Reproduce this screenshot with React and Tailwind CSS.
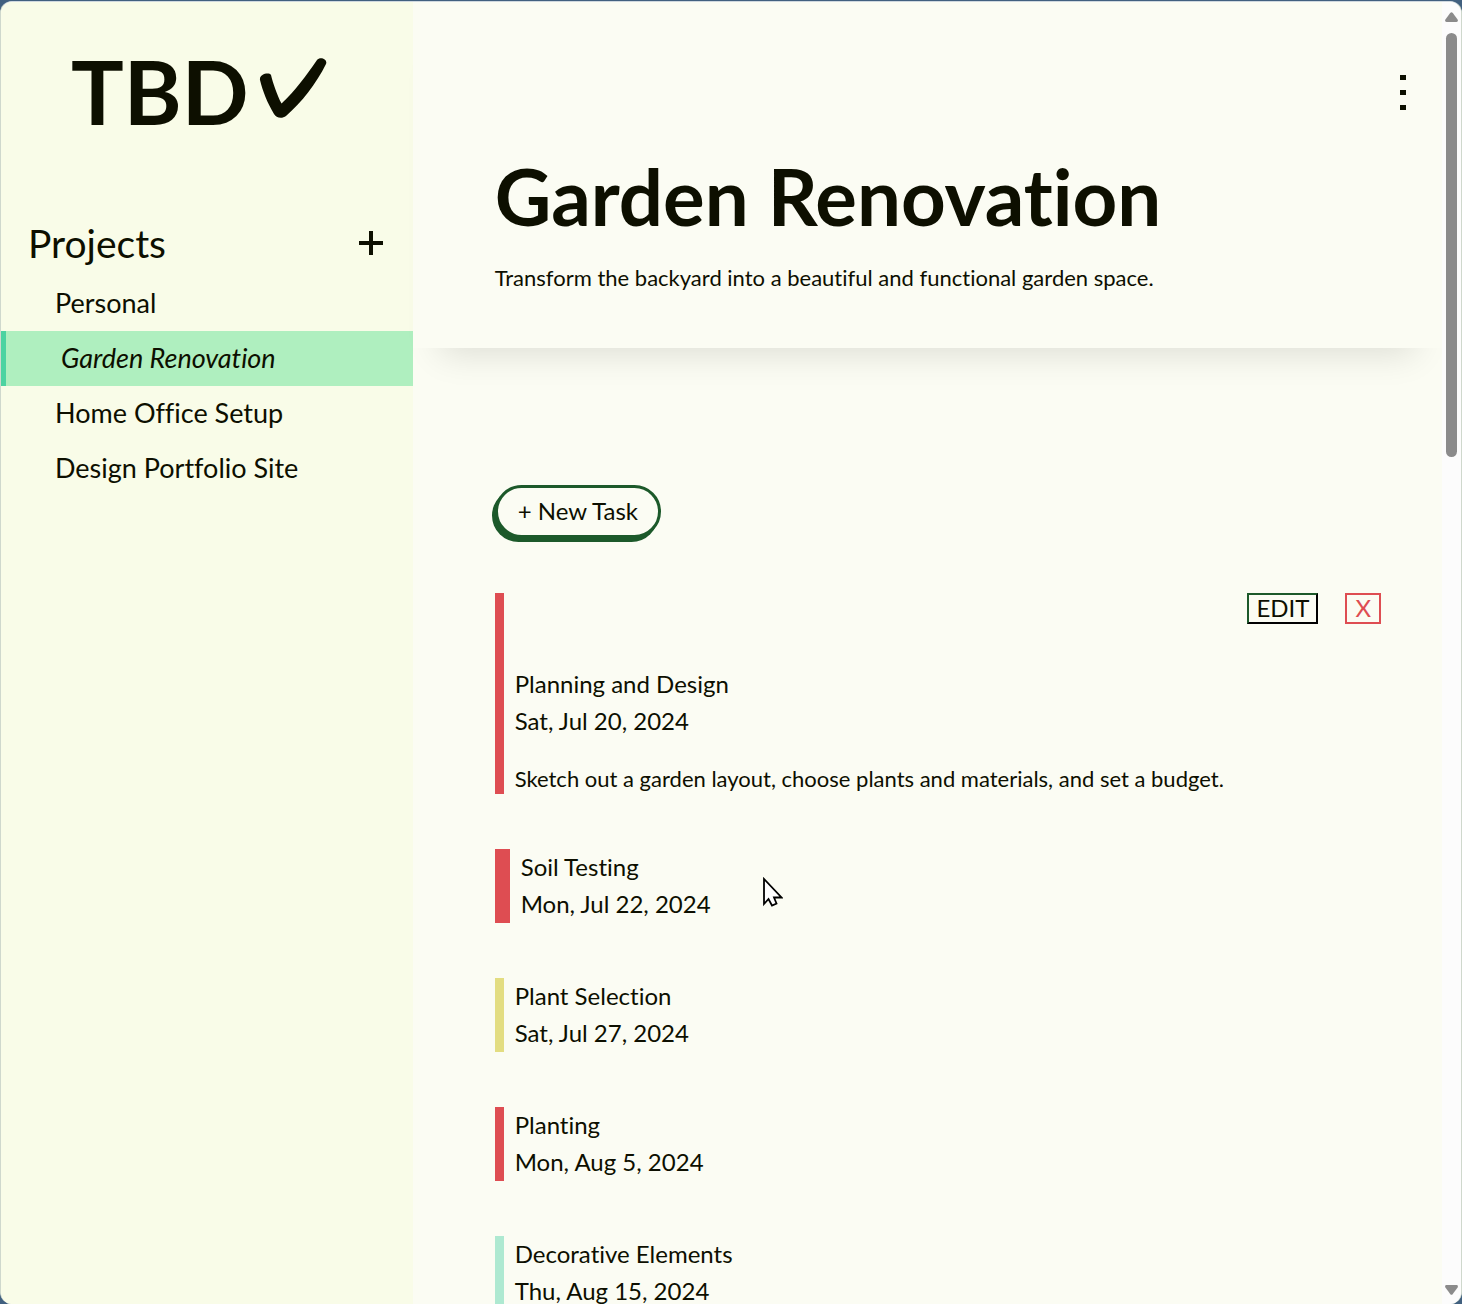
import React from "react";

const projects = ["Personal", "Garden Renovation", "Home Office Setup", "Design Portfolio Site"];

const tasks = [
  {
    title: "Planning and Design",
    date: "Sat, Jul 20, 2024",
    bar: "border-[#de4d52] border-l-9",
    details: "Sketch out a garden layout, choose plants and materials, and set a budget.",
  },
  { title: "Soil Testing", date: "Mon, Jul 22, 2024", bar: "border-[#de4d52] border-l-15" },
  { title: "Plant Selection", date: "Sat, Jul 27, 2024", bar: "border-[#e3dd81] border-l-9" },
  { title: "Planting", date: "Mon, Aug 5, 2024", bar: "border-[#de4d52] border-l-9" },
  { title: "Decorative Elements", date: "Thu, Aug 15, 2024", bar: "border-[#aee9d1] border-l-9" },
];

function Sidebar() {
  return (
    <aside className="bg-[#f9fce8]">
      <h1 className="flex items-start pl-[70px] pt-[31px] text-[88px] font-bold leading-[116px]">
        TBD
        <svg viewBox="0 0 68 62" className="ml-[10px] mt-6 h-[62px] w-[68px]" fill="currentColor" aria-hidden="true">
          <path d="M1 23C0 17 10 15 12 18C14 26 18 38 22.500 46.500C36 34 47 19 58 3C61-1 69 2 67 7C57 27 43 45 27 59C23 62 17 61 15 57C8 45 4 35 1 23Z" />
        </svg>
      </h1>
      <div className="flex items-center justify-between pl-[27px] pr-[29px] pt-[64px]">
        <h2 className="text-[39px] leading-[60px]">Projects</h2>
        <button type="button" aria-label="Add project">
          <svg viewBox="0 0 26 26" className="size-[26px]" stroke="currentColor" strokeWidth="4" aria-hidden="true">
            <path d="M1 13H25M13 1V25" />
          </svg>
        </button>
      </div>
      <nav className="pt-[3px]">
        <ul>
          {projects.map((name) => (
            <li key={name}>
              <a
                href="#"
                aria-current={name === "Garden Renovation" ? "page" : undefined}
                className="block pb-[2px] pl-[54px] text-[27px] leading-[53px] aria-[current=page]:border-l-5 aria-[current=page]:border-[#4cd3a1] aria-[current=page]:bg-[#afefbf] aria-[current=page]:pl-[55px] aria-[current=page]:italic"
              >
                {name}
              </a>
            </li>
          ))}
        </ul>
      </nav>
    </aside>
  );
}

function Task({ task }) {
  return (
    <li className={"pb-[2px] pl-[11px] text-[24px] leading-[36px] " + task.bar}>
      {task.details && (
        <div className="flex h-[73px] items-start justify-end gap-[27px]">
          <button type="button" className="border-2 border-b-black border-l-[#1c592a] border-r-black border-t-[#1c592a] px-[7px] pb-[2px] leading-[25px]">
            EDIT
          </button>
          <button type="button" aria-label="Delete task" className="border-2 border-[#de4d52] px-2 pb-[2px] leading-[25px] text-[#de4d52]">
            X
          </button>
        </div>
      )}
      <h3 className="pb-px">{task.title}</h3>
      <p className="-mb-px">{task.date}</p>
      {task.details && <p className="pt-7 text-[22px] leading-[26px]">{task.details}</p>}
    </li>
  );
}

function Scrollbar() {
  return (
    <div className="flex w-[19px] shrink-0 flex-col items-center justify-between bg-[#fcfcfc] pb-[9px] pt-[10px] text-[#8b8b8b]" aria-hidden="true">
      <div className="flex flex-1 flex-col items-center gap-[11px]">
        <svg viewBox="0 0 13 10" className="h-[10px] w-[13px] shrink-0" fill="currentColor">
          <path d="M5.200 1Q6.500-.7 7.800 1L12.600 7.500Q13.600 10 11.500 10H1.500Q-.6 10 .4 7.500Z" />
        </svg>
        <div className="h-1/3 w-[11px] rounded-full bg-[#8b8b8b]" />
      </div>
      <svg viewBox="0 0 13 10" className="h-[10px] w-[13px] shrink-0" fill="currentColor">
        <path d="M5.200 9Q6.500 10.700 7.800 9L12.600 2.500Q13.600 0 11.500 0H1.500Q-.6 0 .4 2.500Z" />
      </svg>
    </div>
  );
}

export default function App() {
  return (
    <div className="h-screen overflow-hidden bg-[#41607f] pt-px font-['Lato','Noto_Sans',sans-serif] text-[#0d0f00] [font-variant-ligatures:none]">
      <div className="flex h-full overflow-hidden rounded-xl border-x border-t border-x-[#cfd8cd] border-t-[#cfd8df] bg-[#fbfcf3]">
        <div className="grid min-w-0 flex-1 grid-cols-[2fr_5fr]">
          <Sidebar />
          <main className="min-w-0">
            <header className="px-[82px] pb-[54px] pt-[66px] shadow-[0_33px_33px_-27px_rgba(0,0,0,0.12)]">
              <div className="-mr-[54px] flex justify-end">
                <button type="button" aria-label="Project menu" className="px-2">
                  <svg viewBox="0 0 6 50" className="h-[50px] w-[6px]" fill="currentColor" aria-hidden="true">
                    <path d="M0 7H6V12H0ZM0 22H6V27H0ZM0 37H6V42H0Z" />
                  </svg>
                </button>
              </div>
              <h2 className="pt-[22px] text-[78px] font-bold leading-[112px]">Garden Renovation</h2>
              <p className="pt-[10px] text-[22px] leading-[32px]">Transform the backyard into a beautiful and functional garden space.</p>
            </header>
            <section className="pl-[82px] pr-[61px] pt-[137px]">
              <button
                type="button"
                className="rounded-full border-3 border-[#1c592a] bg-[#fbfcf3] px-5 pb-[2px] text-[24px] leading-[45px] shadow-[-3px_4px_0_#1c592a]"
              >
                + New Task
              </button>
              <ul className="flex flex-col gap-[55px] pt-[55px]">
                {tasks.map((task) => (
                  <Task key={task.title} task={task} />
                ))}
              </ul>
            </section>
          </main>
        </div>
        <Scrollbar />
      </div>
      <svg viewBox="0 0 21 30" className="pointer-events-none absolute left-[762px] top-[877px] h-[30px] w-[21px]" aria-hidden="true">
        <path d="M2 2V27L6.500 22L10 28.500L14.500 26.500L12 20.500H19.500Z" fill="#fff" stroke="#000" strokeWidth="1.800" />
      </svg>
    </div>
  );
}
